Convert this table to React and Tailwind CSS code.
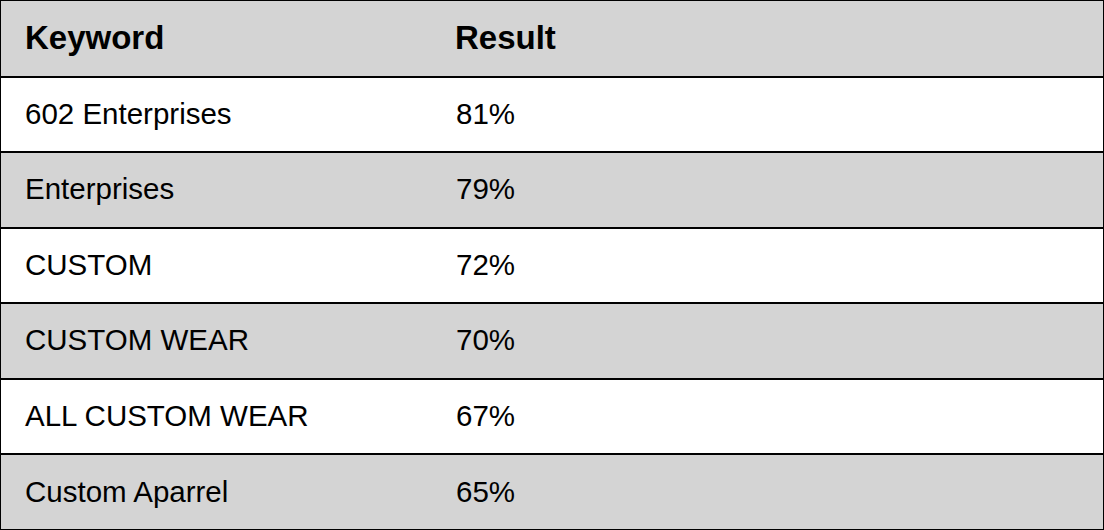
import React from "react";

const rows = [
  ["602 Enterprises", "81%"],
  ["Enterprises", "79%"],
  ["CUSTOM", "72%"],
  ["CUSTOM WEAR", "70%"],
  ["ALL CUSTOM WEAR", "67%"],
  ["Custom Aparrel", "65%"],
];

export default function App() {
  return (
    <div
      className="w-[1104px] h-[530px] border border-black flex flex-col bg-white text-black"
      style={{ fontFamily: '"Liberation Sans", Arial, sans-serif' }}
    >
      <div className="flex-1 grid grid-cols-[430px_1fr] items-center bg-[#d4d4d4] font-bold text-[33px] pb-[2px]">
        <div className="pl-[24px]">Keyword</div>
        <div className="pl-[24px]">Result</div>
      </div>
      {rows.map(([k, r], i) => (
        <div
          key={k}
          className={
            i % 2 === 0
              ? "flex-1 grid grid-cols-[430px_1fr] items-center border-t-2 border-black bg-white text-[29.5px] pb-[1px]"
              : "flex-1 grid grid-cols-[430px_1fr] items-center border-t-2 border-black bg-[#d4d4d4] text-[29.5px] pb-[1px]"
          }
        >
          <div className="pl-[24px]">{k}</div>
          <div className="pl-[25px]">{r}</div>
        </div>
      ))}
    </div>
  );
}
